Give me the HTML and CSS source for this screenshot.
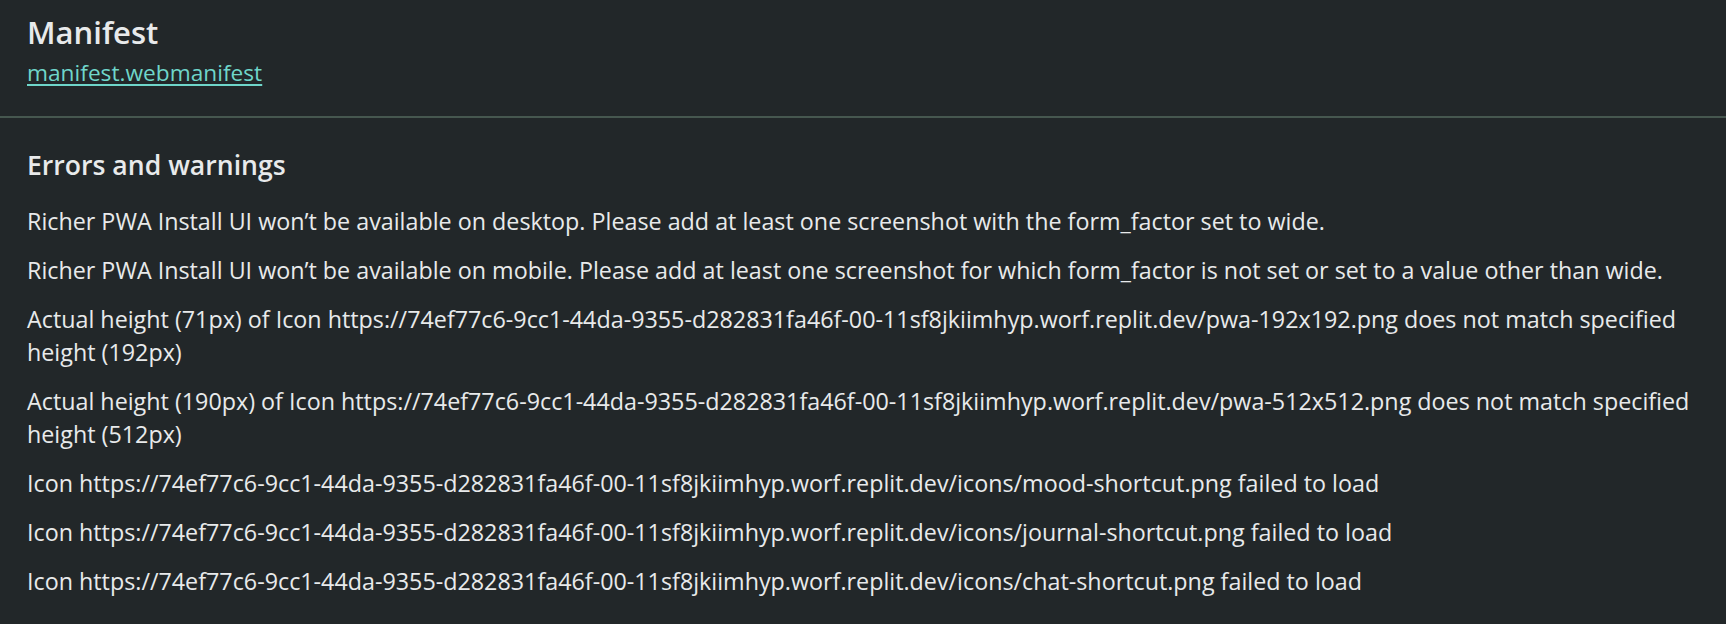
FILE: index.html
```html
<!DOCTYPE html>
<html lang="en">
<head>
<meta charset="utf-8">
<title>Manifest</title>
<link rel="stylesheet" href="styles.css">
</head>
<body>
<div class="page">
  <header class="manifest-header">
    <h1 class="manifest-title">Manifest</h1>
    <a class="manifest-link" href="#">manifest.webmanifest</a>
  </header>
  <section class="report">
    <h2 class="report-title">Errors and warnings</h2>
    <p class="report-item">Richer PWA Install UI won’t be available on desktop. Please add at least one screenshot with the form_factor set to wide.</p>
    <p class="report-item">Richer PWA Install UI won’t be available on mobile. Please add at least one screenshot for which form_factor is not set or set to a value other than wide.</p>
    <p class="report-item">Actual height (71px) of Icon https://74ef77c6-9cc1-44da-9355-d282831fa46f-00-11sf8jkiimhyp.worf.replit.dev/pwa-192x192.png does not match specified height (192px)</p>
    <p class="report-item">Actual height (190px) of Icon https://74ef77c6-9cc1-44da-9355-d282831fa46f-00-11sf8jkiimhyp.worf.replit.dev/pwa-512x512.png does not match specified height (512px)</p>
    <p class="report-item">Icon https://74ef77c6-9cc1-44da-9355-d282831fa46f-00-11sf8jkiimhyp.worf.replit.dev/icons/mood-shortcut.png failed to load</p>
    <p class="report-item">Icon https://74ef77c6-9cc1-44da-9355-d282831fa46f-00-11sf8jkiimhyp.worf.replit.dev/icons/journal-shortcut.png failed to load</p>
    <p class="report-item">Icon https://74ef77c6-9cc1-44da-9355-d282831fa46f-00-11sf8jkiimhyp.worf.replit.dev/icons/chat-shortcut.png failed to load</p>
  </section>
</div>
</body>
</html>
```
FILE: styles.css
```css
html, body {
  margin: 0;
  padding: 0;
  background: #222729;
  height: 100%;
}

.page {
  font-family: "Open Sans", "Noto Sans", sans-serif;
  color: #e8eaeb;
  overflow: hidden;
}

.manifest-header {
  display: flex;
  flex-direction: column;
  align-items: flex-start;
  padding: 13px 4px 29px 27px;
  border-bottom: 2px solid #46574f;
}

.manifest-title {
  margin: 0;
  font-size: 31px;
  font-weight: 600;
  line-height: 38px;
}

.manifest-link {
  margin-top: 8px;
  font-size: 22.7px;
  line-height: 28px;
  color: #6fd6ca;
  text-decoration: underline;
  text-decoration-thickness: 2px;
  text-underline-offset: 3px;
}

.report {
  padding: 30px 4px 0 27px;
}

.report-title {
  margin: 0 0 23px;
  font-size: 26.6px;
  font-weight: 600;
  line-height: 34px;
}

.report-item {
  margin: 0 0 16px;
  font-size: 23.3px;
  line-height: 33px;
}
```
